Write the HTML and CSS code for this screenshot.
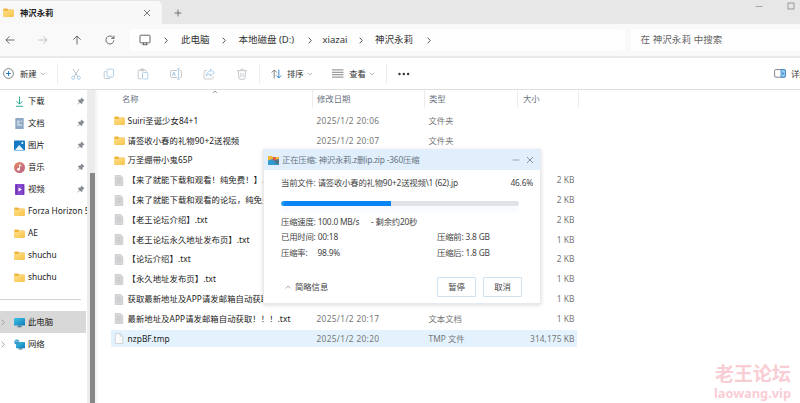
FILE: index.html
```
<!DOCTYPE html>
<html>
<head>
<meta charset="utf-8">
<title>神沢永莉</title>
<link rel="stylesheet" href="styles.css">
</head>
<body>
<svg class="defs" width="0" height="0">
  <linearGradient id="gold" x1="0" y1="0" x2="1" y2="1"><stop offset="0" stop-color="#ffe08a"/><stop offset="1" stop-color="#f7c44a"/></linearGradient>
  <linearGradient id="sky" x1="0" y1="0" x2="1" y2="1"><stop offset="0" stop-color="#42c6e8"/><stop offset="1" stop-color="#0f78b8"/></linearGradient>
  <linearGradient id="melody" x1="0" y1="0" x2="1" y2="1"><stop offset="0" stop-color="#e58a62"/><stop offset="1" stop-color="#b8608c"/></linearGradient>
  <symbol id="folder" viewBox="0 0 11 9"><path d="M.3 1.2Q.3.4 1 .4h3l1.2 1.1H10q.7 0 .7.7V8q0 .7-.7.7H1q-.7 0-.7-.7z" fill="#efb63d"/><path d="M.3 2.9h3.9l1.1-.8H10q.7 0 .7.7V8q0 .7-.7.7H1q-.7 0-.7-.7z" fill="url(#gold)"/></symbol>
  <symbol id="text" viewBox="0 0 9 11"><path d="M.7.5h5.4l2.2 2.1v7.9H.7z" fill="#d9dadb" stroke="#bcbebf" stroke-width=".6"/><path d="M2 3.2h4.8M2 4.8h4.8M2 6.4h4.8M2 8h4.8" stroke="#b4b7b9" stroke-width=".5"/></symbol>
  <symbol id="blank" viewBox="0 0 9 11"><path d="M.7.5h5l2.6 2.6v7.4H.7z" fill="#fafafa" stroke="#b9bfc4" stroke-width=".6"/><path d="M5.7.5v2.6h2.6" fill="none" stroke="#b9bfc4" stroke-width=".6"/></symbol>
  <symbol id="pin" viewBox="0 0 8 8"><path d="M4.5.5 7.5 3.4 6.6 4 5.7 4.4 5.3 6.4 4.4 7 2.8 5.5.7 7.6.3 7.3 2.3 5 .9 3.5 1.6 2.7 3.6 2.4 4 1.4z" fill="#858b90"/></symbol>
  <symbol id="right" viewBox="0 0 4 7"><path d="M.7.7 3.3 3.5.7 6.3" fill="none" stroke="currentColor" stroke-width=".9"/></symbol>
  <symbol id="down" viewBox="0 0 6 4"><path d="M.8.9 3 2.8 5.2.9" fill="none" stroke="currentColor" stroke-width=".7"/></symbol>
</svg>
<div class="window">
  <header class="titlebar">
    <div class="tab"><svg class="ic-folder"><use href="#folder"/></svg><b>神沢永莉</b>
      <svg class="tab-x" viewBox="0 0 8 8"><path d="M1 1l6 6M7 1 1 7" stroke="#555" stroke-width=".8"/></svg></div>
    <svg class="plus" viewBox="0 0 8 8"><path d="M4 .6v6.8M.6 4h6.8" stroke="#555" stroke-width=".8"/></svg>
    <div class="winctl">
      <svg width="8" height="8"><path d="M.5 4.5h7" stroke="#999" stroke-width=".8"/></svg>
      <svg width="8" height="8"><rect x="1" y="1" width="6" height="6" fill="none" stroke="#888" stroke-width=".8"/></svg>
    </div>
  </header>
  <nav class="navbar">
    <div class="arrows">
      <svg viewBox="0 0 10 10"><path d="M9.5 5H1M4.6 1.3.9 5l3.7 3.7" /></svg>
      <svg class="dim" viewBox="0 0 10 10"><path d="M.5 5H9M5.4 1.3 9.1 5 5.4 8.7"/></svg>
      <svg viewBox="0 0 10 10"><path d="M5 9.5V1M1.3 4.7 5 1l3.7 3.7"/></svg>
      <svg viewBox="0 0 10 10"><path d="M8.9 5.4A4 4 0 1 1 7.8 2.2L9 3.4M9 .6v2.8H6.2"/></svg>
    </div>
    <div class="address">
      <svg class="pc" viewBox="0 0 12 12"><path d="M1.700 1.200h8.600q.7 0 .7.7v6.200q0 .7-.7.7H1.700Q1 8.800 1 8.100V1.900q0-.7.7-.7zM4.500 8.800v1.700M7.500 8.800v1.700M3.300 10.700h5.400"/></svg>
      <svg class="chev c1"><use href="#right"/></svg><span class="w1">此电脑</span>
      <svg class="chev c2"><use href="#right"/></svg><span class="w2">本地磁盘 (D:)</span>
      <svg class="chev c3"><use href="#right"/></svg><span class="w3">xiazai</span>
      <svg class="chev c4"><use href="#right"/></svg><span class="w4">神沢永莉</span>
      <svg class="chev c5"><use href="#right"/></svg>
    </div>
    <div class="search">在 神沢永莉 中搜索</div>
  </nav>
  <div class="toolbar">
    <div class="group new">
      <svg width="11" height="11" viewBox="0 0 11 11"><circle cx="5.500" cy="5.500" r="4.900" fill="none" stroke="#566" stroke-width=".8"/><path d="M5.500 3v5M3 5.500h5" stroke="#1878c8" stroke-width=".9"/></svg>
      <span>新建</span><svg class="drop"><use href="#down"/></svg>
    </div>
    <div class="group edit">
      <svg viewBox="0 0 12 12"><path d="M3 1l4.800 7.600M9 1 4.200 8.600" stroke="#aab0b6"/><circle cx="3.200" cy="9.700" r="1.600" stroke="#92bfe4"/><circle cx="8.800" cy="9.700" r="1.600" stroke="#92bfe4"/></svg>
      <svg viewBox="0 0 12 12"><path d="M3.500 3.500H2.200Q1.200 3.500 1.200 4.500v5q0 1 1 1h4q1 0 1-1V9" stroke="#b2bcc6"/><rect x="4" y="1.200" width="6.600" height="7.800" rx="1" stroke="#9ac4e6"/></svg>
      <svg viewBox="0 0 12 12"><path d="M4.500 10.800H2.200q-1 0-1-1V3q0-1 1-1h6q1 0 1 1v.8M3.700 1h3v1.800h-3z" stroke="#b4b8bc"/><rect x="5.500" y="4.500" width="5.300" height="6.500" rx=".8" stroke="#9ac4e6"/></svg>
      <svg viewBox="0 0 12 12"><path d="M7 2.500H1.500q-1 0-1 1v5q0 1 1 1H7M9.800 2.500h.7q1 0 1 1v5q0 1-1 1h-.7" stroke="#b4b8bc"/><path d="M8.500 1v10M7.200.8h2.600M7.200 11.200h2.600M2.300 8l1.600-4 1.600 4M2.900 6.600h2" stroke="#93c0e4"/></svg>
      <svg viewBox="0 0 12 12"><path d="M4 2.500H2q-1 0-1 1V10q0 1 1 1h7q1 0 1-1V8.500" stroke="#b8bcc0"/><path d="M7.500 1.200 11.300 4.700 7.500 8V6Q4.500 5.800 3.300 8 3.500 3.600 7.500 3.300z" stroke="#93c0e4"/></svg>
      <svg viewBox="0 0 12 12"><path d="M1 2.700h10M4.500 2.500Q4.500 1 6 1t1.500 1.500M2.200 2.700 3 10.300q.1.900 1 .9h4q.9 0 1-.9l.8-7.600M4.800 5v4M7.200 5v4" stroke="#b2b6ba"/></svg>
    </div>
    <div class="group sort">
      <svg width="11" height="10" viewBox="0 0 11 10"><g fill="none" stroke-width=".9"><path d="M3.200 9.500V1M.7 3.500 3.200 1l2.500 2.500" stroke="#777"/><path d="M7.800.5V9M5.300 6.500 7.800 9l2.500-2.500" stroke="#2880c8"/></g></svg>
      <span>排序</span><svg class="drop"><use href="#down"/></svg>
      <svg class="lines" width="12" height="9"><path d="M0 .9h11.500M0 3.300h11.500M0 5.700h11.500M0 8.100h11.500" stroke="#777" stroke-width=".9"/></svg>
      <span>查看</span><svg class="drop"><use href="#down"/></svg>
    </div>
    <svg class="dots" width="12" height="4"><g fill="#333"><circle cx="1.500" cy="2" r="1.200"/><circle cx="5.800" cy="2" r="1.200"/><circle cx="10.100" cy="2" r="1.200"/></g></svg>
    <div class="details"><svg width="12" height="9"><rect x=".6" y=".6" width="10.800" height="7.600" rx="1.200" fill="#fff" stroke="#667" stroke-width=".8"/><path d="M7 .6h3.200q1.200 0 1.200 1.200v5.200q0 1.200-1.200 1.200H7z" fill="#9bd0f5" stroke="#2880c8" stroke-width=".8"/><path d="M8.500 3v3l1.500-1.500z" fill="#1668b0"/></svg><span>详细信息</span></div>
  </div>
  <main class="body">
    <aside class="side">
      <div class="item"><svg viewBox="0 0 11 11"><path d="M5.500 .5v7.500M2.500 5.200l3 3 3-3" fill="none" stroke="#2fae91" stroke-width="1"/><path d="M2 10.300h7" stroke="#2fae91"/></svg><span>下载</span><svg class="pin"><use href="#pin"/></svg></div>
      <div class="item"><svg viewBox="0 0 11 11"><path d="M1.300 0h8.400v11H1.300z" fill="#8da8c4"/><path d="M3 3.200h2.500M6.500 3.200H8M3 5h2.500M3 7h5" stroke="#eef5fb" stroke-width="1"/></svg><span>文档</span><svg class="pin"><use href="#pin"/></svg></div>
      <div class="item"><svg viewBox="0 0 11 11"><rect y=".5" width="11" height="10" rx=".8" fill="#1479c4"/><path d="M1 10l4.200-5L9.800 10z" fill="#e8f6ff"/><circle cx="8.300" cy="3" r="1" fill="#fff"/></svg><span>图片</span><svg class="pin"><use href="#pin"/></svg></div>
      <div class="item"><svg viewBox="0 0 11 11"><circle cx="5.500" cy="5.500" r="5.500" fill="url(#melody)"/><circle cx="4.500" cy="7.300" r="1.400" fill="#fff"/><path d="M5.500 7.300V2.700l2 1.100" fill="none" stroke="#fff" stroke-width=".9"/></svg><span>音乐</span><svg class="pin"><use href="#pin"/></svg></div>
      <div class="item"><svg viewBox="0 0 11 11"><rect x="1" width="9.500" height="11" rx=".8" fill="#8748cf"/><path d="M2.300 1v9.500M9.200 1v9.500" stroke="#452080" stroke-width="1" stroke-dasharray="1.200 1"/><path d="M4.500 3.500v4l3.300-2z" fill="#fff"/></svg><span>视频</span><svg class="pin"><use href="#pin"/></svg></div>
      <div class="item"><svg class="ic-folder"><use href="#folder"/></svg><span>Forza Horizon 5</span></div>
      <div class="item"><svg class="ic-folder"><use href="#folder"/></svg><span>AE</span></div>
      <div class="item"><svg class="ic-folder"><use href="#folder"/></svg><span>shuchu</span></div>
      <div class="item"><svg class="ic-folder"><use href="#folder"/></svg><span>shuchu</span></div>
      <div class="rule"></div>
      <div class="item root on"><svg class="tw"><use href="#right"/></svg><svg viewBox="0 0 11 11"><rect y="1" width="11" height="7.500" rx=".6" fill="url(#sky)"/><path d="M4.200 8.500h2.600v1H8v.7H3v-.7h1.200z" fill="#47788f"/></svg><span>此电脑</span></div>
      <div class="item root"><svg class="tw"><use href="#right"/></svg><svg viewBox="0 0 11 11"><rect x="2" y="3" width="9" height="6.300" rx=".6" fill="url(#sky)"/><path d="M4.500 9.300h4v1.200h-4z" fill="#47788f"/><circle cx="2.800" cy="3" r="2.500" fill="#3794c6"/><path d="M1 2.500q2-.8 3.500.500" stroke="#bdeaff" fill="none" stroke-width=".7"/></svg><span>网络</span></div>
    </aside>
    <div class="scroll"><div class="thumb"></div></div>
    <section class="files">
      <div class="head"><span class="n">名称<svg class="up" viewBox="0 0 6 4"><path d="M.8 3 3 1l2.200 2" fill="none" stroke="#777" stroke-width=".7"/></svg></span><span class="d">修改日期</span><span class="t">类型</span><span class="s">大小</span></div>
      <div class="row"><svg class="ic-folder"><use href="#folder"/></svg><span class="n">Suiri圣诞少女84+1</span><span class="d">2025/1/2 20:06</span><span class="t">文件夹</span><span class="s"></span></div>
      <div class="row"><svg class="ic-folder"><use href="#folder"/></svg><span class="n">请签收小春的礼物90+2送视频</span><span class="d">2025/1/2 20:07</span><span class="t">文件夹</span><span class="s"></span></div>
      <div class="row"><svg class="ic-folder"><use href="#folder"/></svg><span class="n">万圣绷带小鬼65P</span><span class="d"></span><span class="t"></span><span class="s"></span></div>
      <div class="row"><svg><use href="#text"/></svg><span class="n">【来了就能下载和观看！纯免费！】.txt</span><span class="d"></span><span class="t"></span><span class="s">2 KB</span></div>
      <div class="row"><svg><use href="#text"/></svg><span class="n">【来了就能下载和观看的论坛，纯免费！】.txt</span><span class="d"></span><span class="t"></span><span class="s">2 KB</span></div>
      <div class="row"><svg><use href="#text"/></svg><span class="n">【老王论坛介绍】.txt</span><span class="d"></span><span class="t"></span><span class="s">2 KB</span></div>
      <div class="row"><svg><use href="#text"/></svg><span class="n">【老王论坛永久地址发布页】.txt</span><span class="d"></span><span class="t"></span><span class="s">1 KB</span></div>
      <div class="row"><svg><use href="#text"/></svg><span class="n">【论坛介绍】.txt</span><span class="d"></span><span class="t"></span><span class="s">2 KB</span></div>
      <div class="row"><svg><use href="#text"/></svg><span class="n">【永久地址发布页】.txt</span><span class="d"></span><span class="t"></span><span class="s">1 KB</span></div>
      <div class="row"><svg><use href="#text"/></svg><span class="n">获取最新地址及APP请发邮箱自动获取</span><span class="d"></span><span class="t"></span><span class="s">1 KB</span></div>
      <div class="row"><svg><use href="#text"/></svg><span class="n">最新地址及APP请发邮箱自动获取！！！.txt</span><span class="d">2025/1/2 20:17</span><span class="t">文本文档</span><span class="s">1 KB</span></div>
      <div class="row on"><svg><use href="#blank"/></svg><span class="n">nzpBF.tmp</span><span class="d">2025/1/2 20:20</span><span class="t">TMP 文件</span><span class="s">314,175 KB</span></div>
    </section>
  </main>
  <div class="dialog">
    <div class="dlg-head">
      <svg width="11" height="10" viewBox="0 0 11 10"><path d="M0 1h4l1 1h6v8H0z" fill="#f2b43b"/><path d="M0 5.500 4.500 4 11 6.500V10H0z" fill="#2f9bd0"/><path d="M5 2h2.500v3.500H5z" fill="#d9503c"/><path d="M6.500 5 11 4v5.500L7 8z" fill="#51748a"/></svg>
      <span class="dlg-title">正在压缩: 神沢永莉.z删ip.zip -360压缩</span>
      <svg class="dm" width="8" height="8"><path d="M.5 4h7" stroke="#889" stroke-width=".7"/></svg>
      <svg width="8" height="8"><path d="M1 1l6 6M7 1 1 7" stroke="#667" stroke-width=".7"/></svg>
    </div>
    <div class="dlg-body">
      <div class="line cur"><span class="l">当前文件: 请签收小春的礼物90+2送视频\1 (62).jp</span><span class="pct">46.6%</span></div>
      <div class="bar"><div class="fill"></div></div>
      <div class="line sp"><span class="speed">压缩速度: 100.0 MB/s</span><span>- 剩余约20秒</span></div>
      <div class="line"><span class="col">已用时间: 00:18</span><span>压缩前: 3.8 GB</span></div>
      <div class="line"><span class="col">压缩率:<i></i>98.9%</span><span>压缩后: 1.8 GB</span></div>
      <div class="foot"><svg width="6" height="4"><path d="M.6 3.400 3 1l2.400 2.400" fill="none" stroke="#888" stroke-width=".7"/></svg><span class="brief">简略信息</span><span class="btn">暂停</span><span class="btn">取消</span></div>
    </div>
  </div>
  <div class="mark"><div class="m1">老王论坛</div><div class="m2">laowang.vip</div></div>
</div>
</body>
</html>
```
FILE: styles.css
```
* { box-sizing: border-box; }
body { margin: 0; font: 8.35px/12px "Noto Sans", "Noto Sans CJK SC", sans-serif; color: #222; background: #fff; }
svg { display: block; flex: none; }
.defs { position: absolute; }
.window { position: relative; width: 800px; height: 403px; overflow: hidden; display: flex; flex-direction: column; white-space: nowrap; }
.ic-folder { width: 11px; height: 9px; }

.titlebar { height: 24px; flex: none; background: #e7e7e7; display: flex; align-items: flex-end; }
.tab { width: 162px; height: 23px; background: #f8f8f8; border-radius: 0 5px 0 0; display: flex; align-items: center; padding: 0 11px 0 3px; }
.tab b { margin-left: 6px; font-weight: 600; flex: 1; }
.tab-x { width: 8px; height: 8px; }
.plus { width: 8px; height: 8px; margin: 0 0 7.500px 12px; }
.winctl { margin-left: auto; align-self: flex-start; padding: 2px 5.500px 0 0; display: flex; gap: 24px; }

.navbar { height: 34px; flex: none; background: #f9f9f9; border-bottom: 2px solid #e9e9e9; display: flex; align-items: center; font-size: 9.500px; color: #333; }
.arrows { width: 130px; display: flex; gap: 23.300px; padding-left: 5px; flex: none; }
.arrows svg { width: 10px; height: 10px; fill: none; stroke: #4a4a4a; stroke-width: .8; }
.arrows .dim { stroke: #b5b5b5; }
.address { width: 495px; height: 22px; background: #fefefe; border-radius: 3px; display: flex; align-items: center; padding-left: 8.500px; flex: none; }
.pc { width: 12px; height: 12px; fill: none; stroke: #555; stroke-width: .9; }
.chev { width: 4px; height: 7px; color: #444; }
.c1 { margin-left: 13px; }
.w1 { width: 41px; margin-left: 13.500px; }
.w2 { width: 69px; margin-left: 12.500px; }
.w3 { width: 36.500px; margin-left: 11px; }
.w4 { width: 51.500px; margin-left: 12px; }
.search { flex: 1; margin-left: 6px; height: 22px; padding: 5px 0 0 9.500px; background: #fefefe; color: #666; letter-spacing: .1px; }

.toolbar { height: 32px; flex: none; border-bottom: 1px solid #dedede; display: flex; align-items: center; position: relative; color: #333; }
.group { display: flex; align-items: center; height: 21px; border-right: 1px solid #eee; }
.new { width: 58px; padding-left: 3px; }
.new span { margin-left: 6px; }
.drop { width: 6px; height: 4px; margin-left: 3.500px; color: #999; }
.edit { width: 202px; gap: 21.300px; padding-left: 12px; }
.edit svg { width: 12px; height: 12px; fill: none; stroke-width: .75; }
.sort { width: 127px; padding-left: 11px; }
.sort span { margin-left: 5px; }
.sort .lines { margin-left: 19px; }
.dots { margin-left: 11px; }
.details { margin-left: auto; width: 26px; overflow: hidden; display: flex; align-items: center; gap: 5px; }

.body { display: flex; flex: 1; min-height: 0; }
.side { width: 87px; overflow: hidden; }
.item { height: 22px; display: flex; align-items: center; padding-left: 14px; }
.item > svg { width: 11px; height: 11px; }
.item > svg.ic-folder { height: 9px; }
.item span { margin-left: 3px; }
.item > svg.pin { width: 8px; height: 8px; margin: 0 2.500px 0 auto; }
.rule { height: 1px; width: 81px; background: #d2d2d2; margin: 11px 0; }
.item.root { padding-left: 1px; width: 86px; }
.item > svg.tw { width: 4px; height: 7px; margin-right: 9px; color: #999; }
.item.on { background: #d8d8d8; }
.scroll { width: 12px; background: linear-gradient(90deg, #ececec 0 8px, #f3f3f3 8px, #fff 12px); padding: 83px 0 0 3px; flex: none; }
.thumb { width: 5px; height: 100%; background: #888; }

.files { flex: 1; min-width: 0; padding-left: 12px; }
.head { height: 21px; display: flex; color: #6a7583; }
.head span { height: 18px; padding-top: 3px; border-right: 1px solid #ececec; }
.head .n { width: 202px; padding-left: 11px; position: relative; }
.head .d { width: 112px; padding-left: 4px; }
.head .t { width: 93px; padding-left: 4px; }
.head .s { width: 61px; padding-left: 5px; }
.up { position: absolute; left: 101px; top: 0; width: 6px; height: 4px; }
.row { height: 19.800px; width: 466px; display: flex; align-items: center; padding-left: 3px; color: #777; }
.row > svg { width: 10px; height: 11px; }
.row > svg.ic-folder { width: 11px; height: 9px; margin-right: -1px; }
.row .n { width: 189px; margin-left: 3.500px; color: #222; letter-spacing: .06px; }
.row .d { width: 112px; letter-spacing: .32px; }
.row .s { margin-left: auto; padding-right: 2.500px; letter-spacing: .08px; }
.row.on { height: 17px; margin-top: 1.500px; background: #e4f2fd; }

.dialog { position: absolute; left: 263px; top: 149px; width: 278px; height: 155px; background: #fff; border: 1px solid #e6eaee; border-top: 0; box-shadow: 0 1px 4px rgba(0,0,0,.15); color: #444; letter-spacing: -.19px; }
.dlg-head { height: 21px; background: #e1effc; display: flex; align-items: center; padding: 0 6px 0 4px; color: #667380; }
.dlg-title { margin-left: 3px; flex: 1; }
.dm { margin-right: 6px; }
.dlg-body { padding: 6px 7px 0 17px; }
.line { display: flex; height: 15.300px; align-items: center; }
.cur { height: 13px; }
.cur .pct { margin-left: auto; }
.bar { width: 238px; height: 5px; margin: 12px 0 8.500px; border-radius: 3px; background: #e0e2e7; box-shadow: 0 5px 5px #f3f8fe; }
.fill { width: 110px; height: 5px; background: linear-gradient(90deg, #35b0f2, #0a84f5 4px); border-radius: 3px 0 0 3px; }
.speed { width: 90px; }
.col { width: 156px; }
.col i { display: inline-block; width: 10px; }
.foot { display: flex; align-items: center; margin-top: 16.500px; padding-left: 4px; }
.foot span { letter-spacing: -.05px; }
.brief { margin-left: 4px; width: 142px; }
.btn { width: 39px; height: 20px; line-height: 18px; border: 1px solid #cfe0ef; border-radius: 1px; text-align: center; margin-right: 7px; }
.mark { position: absolute; right: 9px; bottom: 2px; color: #f9cdd4; text-align: right; font-weight: 700; }
.m1 { font-size: 19px; line-height: 21px; }
.m2 { font-size: 12.800px; line-height: 16px; }
```
